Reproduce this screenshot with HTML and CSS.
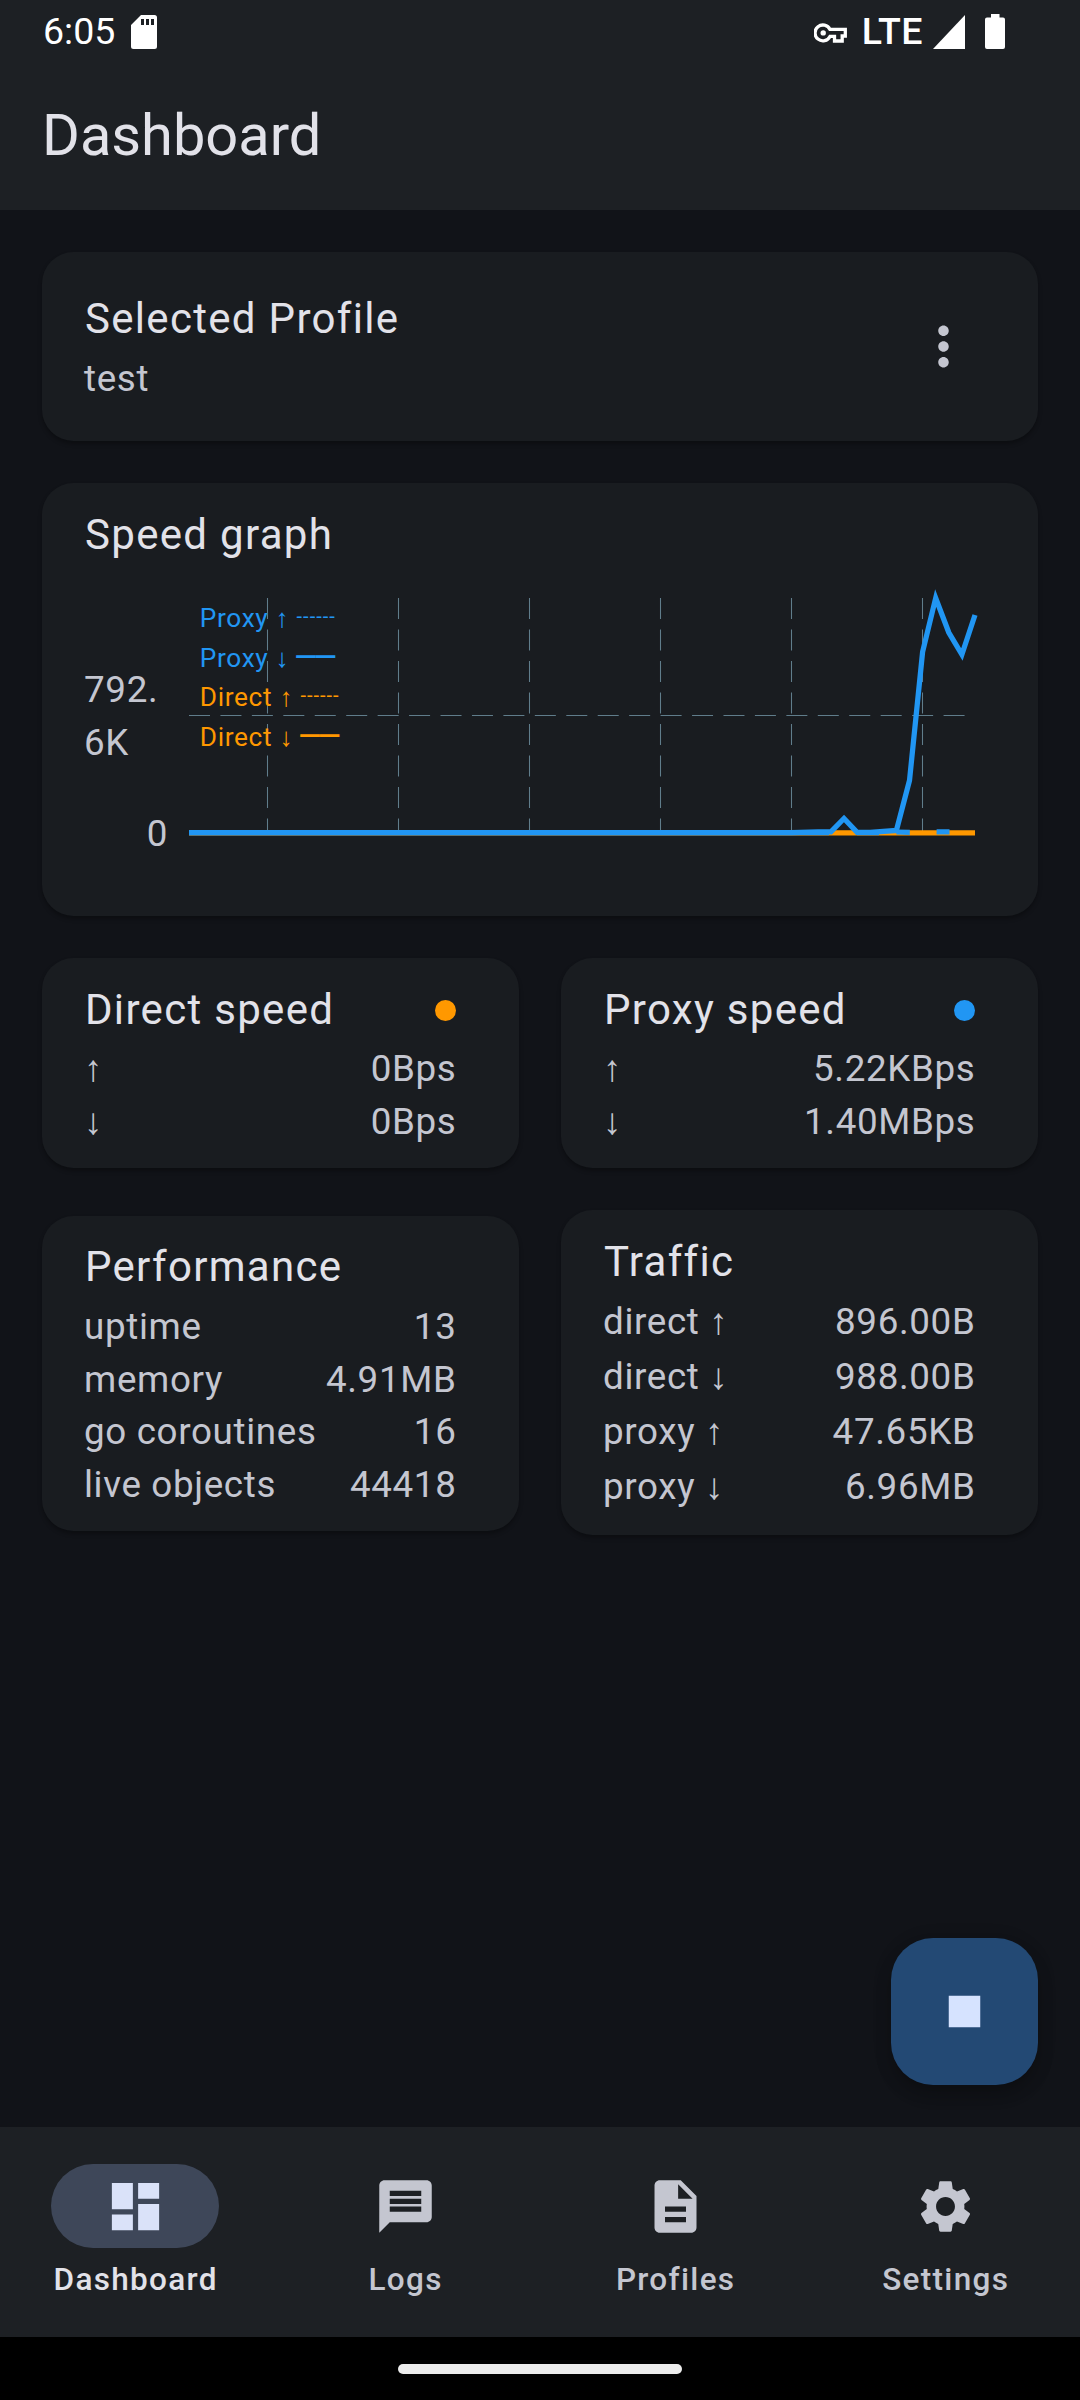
FILE: index.html
```html
<!DOCTYPE html>
<html lang="en">
<head>
<meta charset="utf-8">
<title>Dashboard</title>
<link rel="stylesheet" href="styles.css">
</head>
<body>
<div class="screen">
  <header class="top">
    <div class="status">
      <span class="clock">6:05</span>
      <svg class="sd" viewBox="0 0 26 34"><path fill="#fff" fill-rule="evenodd" d="M10 0H23.500Q26 0 26 2.500V31.500Q26 34 23.500 34H2.500Q0 34 0 31.500V10ZM10 4V10H13V4ZM15 4V10H18V4ZM20 4V10H23V4Z"/></svg>
      <span class="spacer"></span>
      <svg class="key" viewBox="0 0 33 20"><path fill="none" stroke="#fff" stroke-width="3.300" d="M16 6.400A7.900 7.900 0 1 0 16 13.400H20.500V18H28.200V13H31.300V6.400Z"/><circle cx="9.200" cy="9.900" r="2.700" fill="#fff"/></svg>
      <span class="lte">LTE</span>
      <svg class="signal" viewBox="0 0 32 34"><path fill="#fff" d="M32 0V34H0Z"/></svg>
      <svg class="battery" viewBox="0 0 20 35"><path fill="#fff" d="M6 0H14.500V3.500H18Q20 3.500 20 5.500V33Q20 35 18 35H2Q0 35 0 33V5.500Q0 3.500 2 3.500H6Z"/></svg>
    </div>
    <h1 class="title">Dashboard</h1>
  </header>

  <main class="content">
    <section class="card profile">
      <div>
        <h2>Selected Profile</h2>
        <p>test</p>
      </div>
      <svg class="more" viewBox="0 0 24 24"><path fill="currentColor" d="M12 8c1.100 0 2-.9 2-2s-.9-2-2-2-2 .9-2 2 .9 2 2 2zm0 2c-1.100 0-2 .9-2 2s.9 2 2 2 2-.9 2-2-.9-2-2-2zm0 6c-1.100 0-2 .9-2 2s.9 2 2 2 2-.9 2-2-.9-2-2-2z"/></svg>
    </section>

    <section class="card graph">
      <h2>Speed graph</h2>
      <div class="chart">
        <div class="axis">
          <span class="tick mid">792.<br>6K</span>
          <span class="tick zero">0</span>
        </div>
        <div class="plot">
          <svg class="lines" viewBox="0 0 786 235">
            <g stroke="#607d8b" stroke-width="1.050" stroke-dasharray="21 10.500">
              <path d="M78.500 0V235M209.500 0V235M340.500 0V235M471.500 0V235M602.500 0V235M733.500 0V235"/>
              <path d="M0 117.500H786" stroke-dasharray="21 10.440"/>
            </g>
            <g fill="none" stroke-width="5.250">
              <path stroke="#ff9800" d="M0 234.800H786"/>
              <path stroke="#2196f3" d="M0 234.600H640M668 234.600H690M707.400 234L720.800 234.300M747.600 233.800H760.500"/>
              <path stroke="#2196f3" d="M0 234.600H602.500L628.800 233.800L641.900 233.800L655 220.500L668.100 234.300L681.200 234.300L707.400 232.400L720.500 182.500L733.600 54L746.700 0L759.800 34.500L772.900 56.500L786 17"/>
            </g>
          </svg>
          <ul class="legend">
            <li class="blue">Proxy ↑ <i class="dashes">------</i></li>
            <li class="blue">Proxy ↓ <i class="rules">——</i></li>
            <li class="orange">Direct ↑ <i class="dashes">------</i></li>
            <li class="orange">Direct ↓ <i class="rules">——</i></li>
          </ul>
        </div>
      </div>
    </section>

    <div class="pair">
      <section class="card stats">
        <h2>Direct speed <b class="dot dot-orange"></b></h2>
        <p><span>↑</span><span>0Bps</span></p>
        <p><span>↓</span><span>0Bps</span></p>
      </section>
      <section class="card stats">
        <h2>Proxy speed <b class="dot dot-blue"></b></h2>
        <p><span>↑</span><span>5.22KBps</span></p>
        <p><span>↓</span><span>1.40MBps</span></p>
      </section>
    </div>

    <div class="pair">
      <section class="card stats performance">
        <h2>Performance</h2>
        <p><span>uptime</span><span>13</span></p>
        <p><span>memory</span><span>4.91MB</span></p>
        <p><span>go coroutines</span><span>16</span></p>
        <p><span>live objects</span><span>44418</span></p>
      </section>
      <section class="card stats traffic">
        <h2>Traffic</h2>
        <p><span>direct ↑</span><span>896.00B</span></p>
        <p><span>direct ↓</span><span>988.00B</span></p>
        <p><span>proxy ↑</span><span>47.65KB</span></p>
        <p><span>proxy ↓</span><span>6.96MB</span></p>
      </section>
    </div>

    <button class="fab" aria-label="Stop"><svg viewBox="0 0 24 24"><path fill="currentColor" d="M6 6h12v12H6z"/></svg></button>
  </main>

  <nav class="nav">
    <a class="item active"><span class="pill"><svg viewBox="0 0 24 24"><path fill="currentColor" d="M3 13h8V3H3v10zm0 8h8v-6H3v6zm10 0h8V11h-8v10zm0-18v6h8V3h-8z"/></svg></span><span class="label">Dashboard</span></a>
    <a class="item"><span class="pill"><svg viewBox="0 0 24 24"><path fill="currentColor" d="M20 2H4c-1.100 0-1.990.9-1.990 2L2 22l4-4h14c1.100 0 2-.9 2-2V4c0-1.100-.9-2-2-2zm-2 12H6v-2h12v2zm0-3H6V9h12v2zm0-3H6V6h12v2z"/></svg></span><span class="label">Logs</span></a>
    <a class="item"><span class="pill"><svg viewBox="0 0 24 24"><path fill="currentColor" d="M14 2H6c-1.100 0-1.990.9-1.990 2L4 20c0 1.100.89 2 1.990 2H18c1.100 0 2-.9 2-2V8l-6-6zm2 16H8v-2h8v2zm0-4H8v-2h8v2zm-3-5V3.500L18.500 9H13z"/></svg></span><span class="label">Profiles</span></a>
    <a class="item"><span class="pill"><svg viewBox="0 0 24 24"><path fill="currentColor" d="M19.140 12.940c.04-.3.060-.61.060-.94 0-.32-.02-.64-.07-.94l2.030-1.580c.18-.14.230-.41.120-.61l-1.920-3.320c-.12-.22-.37-.29-.59-.22l-2.390.96c-.5-.38-1.030-.7-1.620-.94l-.36-2.540c-.04-.24-.24-.41-.48-.41h-3.840c-.24 0-.43.17-.47.41l-.36 2.540c-.59.24-1.130.57-1.620.94l-2.390-.96c-.22-.08-.47 0-.59.22L2.740 8.870c-.12.210-.08.470.120.610l2.030 1.580c-.05.3-.09.630-.09.940s.020.640.070.940l-2.030 1.580c-.18.140-.23.410-.12.610l1.920 3.320c.12.220.370.290.590.220l2.390-.96c.5.380 1.030.7 1.620.940l.360 2.540c.05.240.240.410.480.410h3.840c.24 0 .44-.17.470-.41l.36-2.540c.59-.24 1.130-.56 1.620-.94l2.390.96c.22.080.47 0 .59-.22l1.920-3.320c.12-.22.070-.47-.12-.61l-2.010-1.580zM12 15.600c-1.980 0-3.600-1.620-3.600-3.600s1.620-3.600 3.600-3.600 3.600 1.620 3.600 3.600-1.620 3.600-3.600 3.600z"/></svg></span><span class="label">Settings</span></a>
  </nav>
  <footer class="gesture"><span></span></footer>
</div>
</body>
</html>
```
FILE: styles.css
```css
* { box-sizing: border-box; margin: 0; padding: 0; }

body {
  width: 1080px;
  background: #111318;
  font-family: Roboto, sans-serif;
  color: #c4c6d0;
}

.screen {
  display: flex;
  flex-direction: column;
  width: 1080px;
  height: 2400px;
}

.top { height: 210px; background: #1d2024; }
.status {
  display: flex;
  align-items: center;
  height: 63px;
  padding: 0 75px 0 43px;
  color: #fff;
  font-size: 37.500px;
}
.clock, .lte { margin-top: -2px; }
.sd { width: 26px; height: 34px; margin-left: 16px; }
.spacer { flex: 1; }
.key { width: 33px; height: 20px; margin-top: 2px; }
.lte { margin-left: 15px; font-size: 37.500px; font-weight: 500; letter-spacing: .5px; }
.signal { width: 32px; height: 34px; margin-left: 10px; margin-right: 1px; }
.battery { width: 20px; height: 35px; margin-left: 19px; }
.title {
  padding-left: 42px;
  color: #e2e2e9;
  font-size: 57.750px;
  font-weight: 400;
  line-height: 145px;
}

.content {
  position: relative;
  flex: 1;
  display: flex;
  flex-direction: column;
  gap: 42px;
  padding: 42px;
}
.card {
  background: #191c20;
  border-radius: 31.500px;
  box-shadow: 0 3px 4px rgba(0, 0, 0, .3);
}
.card h2 {
  height: 63px;
  padding-left: 1px;
  color: #e2e2e9;
  font-size: 42px;
  font-weight: 400;
  line-height: 61px;
  letter-spacing: 1.310px;
}
.card p, .tick { font-size: 36.750px; line-height: 52.500px; letter-spacing: .66px; }

.profile {
  display: flex;
  justify-content: space-between;
  align-items: center;
  height: 189px;
  padding: 0 63px 0 42px;
}
.profile p { margin-top: 2px; }
.more { width: 63px; height: 63px; }

.graph { height: 433px; padding: 21px 63px 0 42px; }
.chart { display: flex; margin-top: 31px; }
.axis { width: 105px; display: flex; flex-direction: column; }
.tick { display: block; }
.mid { padding-top: 66px; }
.zero { padding: 39px 21px 0 0; text-align: right; }
.plot { position: relative; width: 786px; height: 235px; }
.lines { display: block; width: 786px; height: 235px; overflow: visible; }
.legend {
  position: absolute;
  left: 10.800px;
  top: 1px;
  list-style: none;
  font-size: 26.250px;
  line-height: 39.600px;
  letter-spacing: .66px;
}
.legend li { height: 39.600px; white-space: nowrap; }
.legend i { font-style: normal; line-height: 0; }
.dashes { font-size: 20px; letter-spacing: 1px; vertical-align: 4px; }
.rules { margin-left: -1.500px; font-family: "DejaVu Sans", sans-serif; font-size: 22px; font-weight: 700; letter-spacing: -2.500px; vertical-align: 3.500px; }
.blue { color: #2196f3; }
.orange { color: #ff9800; }

.pair { display: flex; gap: 42px; align-items: center; }
.stats { flex: 1; padding: 21px 62.500px 21px 42px; }
.stats h2, .stats p { display: flex; justify-content: space-between; }
.stats p { padding-top: 1px; height: 52.500px; }
.performance { margin-top: 1px; }
.performance h2 { line-height: 60px; }
.performance p { padding-top: 1.500px; }
.traffic p { height: 55px; line-height: 54px; }
.dot { width: 21px; height: 21px; margin: 21px .5px 0 0; border-radius: 50%; }
.dot-orange { background: #ff9800; }
.dot-blue { background: #2196f3; }

.fab {
  position: absolute;
  right: 42px;
  bottom: 42px;
  display: grid;
  place-items: center;
  width: 147px;
  height: 147px;
  border: 0;
  border-radius: 42px;
  background: #234974;
  color: #d6e3ff;
  box-shadow: 0 10px 16px rgba(0, 0, 0, .2), 0 3px 20px rgba(0, 0, 0, .12);
}
.fab svg { width: 63px; height: 63px; }

.nav { display: flex; height: 210px; background: #1d2024; }
.item {
  flex: 1;
  display: flex;
  flex-direction: column;
  align-items: center;
  justify-content: center;
  gap: 10.500px;
  font-size: 31.500px;
  font-weight: 500;
  line-height: 42px;
  letter-spacing: 1.310px;
}
.label { height: 42px; padding: 1px 0 0 1.300px; }
.pill {
  display: grid;
  place-items: center;
  width: 168px;
  height: 84px;
  border-radius: 42px;
}
.pill svg { width: 63px; height: 63px; margin-top: 1px; }
.active { color: #e2e2e9; }
.active .pill { background: #3e4759; color: #dae2f9; }

.gesture { height: 63px; background: #000; display: grid; place-items: center; }
.gesture span { width: 284px; height: 10px; border-radius: 5px; background: #ececec; }
```
